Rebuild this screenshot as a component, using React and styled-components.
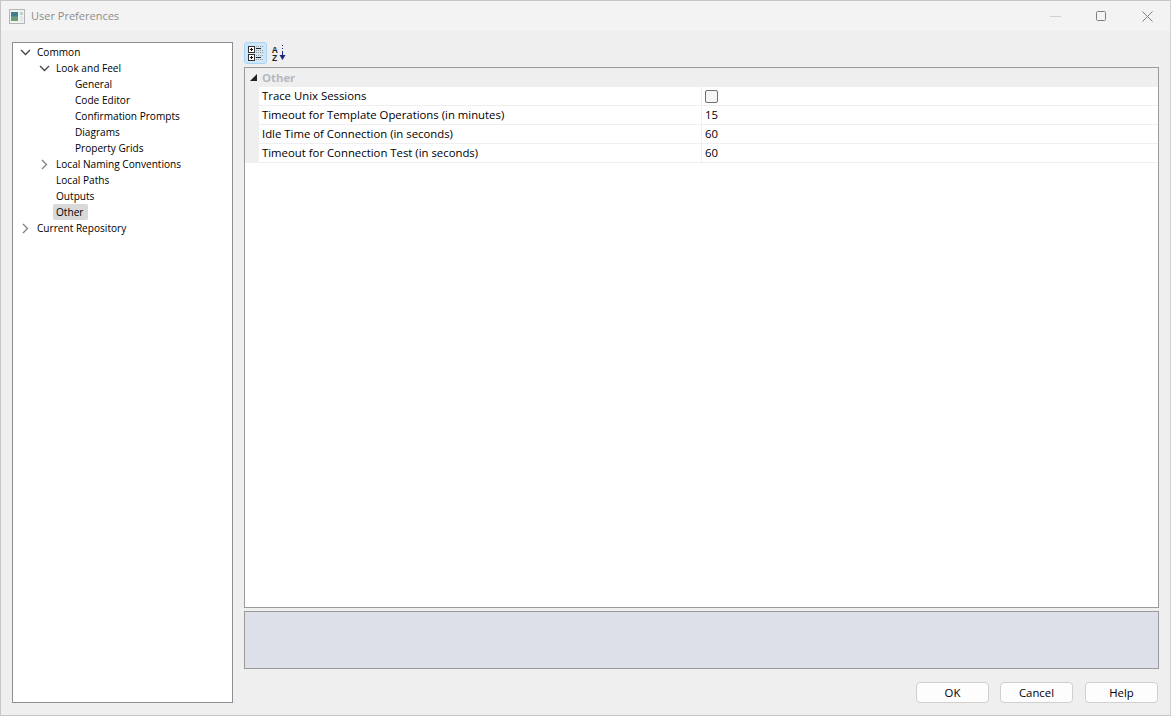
import React from 'react'
import styled, { createGlobalStyle } from 'styled-components'

const Global = createGlobalStyle`
html, body { margin: 0; padding: 0; background: #efefef; }
* { box-sizing: border-box; }
`

const Window = styled.div`
width: 1171px;
height: 716px;
display: flex;
flex-direction: column;
background: #efefef;
border: 1px solid #c6c6c6;
border-right-color: #d0d0d0;
font-family: "Open Sans", "Noto Sans", sans-serif;
font-size: 11.35px;
color: #000;
overflow: hidden;
`

const TitleBar = styled.div`
height: 30px;
display: flex;
align-items: center;
background: #f3f3f3;
padding-left: 8px;
flex-shrink: 0;
`

const Title = styled.div`
margin-left: 6px;
padding-bottom: 2px;
color: #8c8c8c;
font-size: 11px;
flex: 1;
`

const WinButton = styled.div`
width: 46px;
height: 29px;
display: flex;
align-items: center;
justify-content: center;
`

const Content = styled.div`
flex: 1;
display: flex;
padding: 11px 12px 12px 11px;
gap: 11px;
min-height: 0;
`

const Tree = styled.div`
width: 221px;
height: 661px;
background: #fff;
border: 1px solid #8a8f96;
padding-top: 1px;
flex-shrink: 0;
font-size: 10.1px;
`

const TreeRow = styled.div`
height: 16px;
display: flex;
align-items: center;
padding-left: ${p => 7 + p.$level * 19}px;
`

const Chevron = styled.div`
width: 11px;
height: 16px;
display: flex;
align-items: center;
justify-content: center;
`

const TreeLabel = styled.span`
padding: 0 5px 0 3px;
margin-left: 3px;
height: 16px;
line-height: 16px;
border-radius: 2px;
background: ${p => (p.$selected ? '#d9d9d9' : 'transparent')};
white-space: nowrap;
`

const Right = styled.div`
flex: 1;
display: flex;
flex-direction: column;
min-width: 0;
`

const Toolbar = styled.div`
height: 25px;
display: flex;
align-items: flex-start;
gap: 1px;
flex-shrink: 0;
`

const ToolButton = styled.div`
width: 23px;
height: 22px;
display: flex;
align-items: center;
justify-content: center;
border-radius: 3px;
border: 1px solid ${p => (p.$active ? '#a8d4f5' : 'transparent')};
background: ${p => (p.$active ? '#cfe6f8' : 'transparent')};
`

const Grid = styled.div`
width: 915px;
height: 541px;
background: #fff;
border: 1px solid #9a9a9a;
flex-shrink: 0;
`

const CategoryRow = styled.div`
height: 19px;
padding-bottom: 1px;
display: flex;
align-items: center;
background: #efefef;
color: #b4b9c2;
font-weight: 700;
`

const Expander = styled.div`
width: 17px;
display: flex;
justify-content: center;
`

const PropRow = styled.div`
height: 19px;
display: flex;
background: #efefef;
`

const PropName = styled.div`
margin-left: 14px;
width: 443px;
padding-left: 3px;
background: #fff;
border-bottom: 1px solid #efefef;
border-right: 1px solid #efefef;
line-height: 18px;
white-space: nowrap;
`

const PropValue = styled.div`
flex: 1;
padding-left: 3px;
background: #fff;
border-bottom: 1px solid #efefef;
line-height: 17px;
`

const CheckBox = styled.div`
width: 13px;
height: 13px;
margin-top: 3px;
border: 1px solid #6f6f6f;
border-radius: 2px;
background: #f6f6f6;
`

const Description = styled.div`
width: 915px;
height: 58px;
margin-top: 3px;
background: #dde0e8;
border: 1px solid #9a9a9a;
flex-shrink: 0;
`

const Footer = styled.div`
display: flex;
justify-content: flex-end;
gap: 11px;
width: 914px;
margin-top: 13px;
`

const Button = styled.button`
width: 73px;
height: 21px;
padding: 0;
background: #fdfdfd;
border: 1px solid #d0d0d0;
border-radius: 4px;
font: inherit;
color: #000;
`

const HelpButton = styled(Button)`
margin-left: 1px;
`

const ChevronDown = () => (
  <svg width="11" height="7" viewBox="0 0 11 7" fill="none" stroke="#444" strokeWidth="1.3">
    <path d="M1 1l4.5 4.5L10 1" />
  </svg>
)

const ChevronRight = () => (
  <svg width="7" height="11" viewBox="0 0 7 11" fill="none" stroke="#808080" strokeWidth="1.3">
    <path d="M1 1l4.5 4.5L1 10" />
  </svg>
)

const AppIcon = () => (
  <svg width="16" height="15" viewBox="0 0 16 15">
    <rect x="0.5" y="0.5" width="15" height="14" fill="#f2f2f2" stroke="#b5b5b5" />
    <rect x="2" y="3" width="7" height="9" fill="#5b8f9c" />
    <rect x="2" y="3" width="7" height="4" fill="#3f7f8c" />
    <rect x="2" y="8" width="7" height="4" fill="#6a9f73" />
    <rect x="11" y="3" width="3" height="3" fill="#b8d4c4" />
    <rect x="11" y="7" width="3" height="5" fill="#e2e8e8" />
  </svg>
)

const CategorizedIcon = () => (
  <svg width="17" height="17" viewBox="0 0 17 17" fill="none">
    <rect x="1.5" y="1.5" width="6" height="6" fill="#fff" stroke="#333" />
    <path d="M3 4.5h3M4.5 3v3" stroke="#111" />
    <rect x="1.5" y="9.5" width="6" height="6" fill="#fff" stroke="#333" />
    <path d="M3 12.5h3M4.5 11v3" stroke="#111" />
    <path d="M9 3.5h5M9 12.5h5" stroke="#222" />
    <path d="M9 5.5h7M9 7.5h7M9 14.5h7M9 1.5h7M9 10.5h7" stroke="#9a9a9a" strokeDasharray="1 1" />
  </svg>
)

const SortIcon = () => (
  <svg width="17" height="17" viewBox="0 0 17 17">
    <text x="0.8" y="7.5" fontFamily="Liberation Sans" fontSize="8.5" fontWeight="700" fill="#222">A</text>
    <text x="1" y="15.5" fontFamily="Liberation Sans" fontSize="8.5" fontWeight="700" fill="#222">Z</text>
    <path d="M11.5 0v1M11.5 3v1M11.5 6v5" stroke="#1a237e" />
    <path d="M8.5 10h6l-3 5z" fill="#1a237e" />
  </svg>
)

const treeRows = [
  { label: 'Common', level: 0, open: true },
  { label: 'Look and Feel', level: 1, open: true },
  { label: 'General', level: 2 },
  { label: 'Code Editor', level: 2 },
  { label: 'Confirmation Prompts', level: 2 },
  { label: 'Diagrams', level: 2 },
  { label: 'Property Grids', level: 2 },
  { label: 'Local Naming Conventions', level: 1, open: false },
  { label: 'Local Paths', level: 1 },
  { label: 'Outputs', level: 1 },
  { label: 'Other', level: 1, selected: true },
  { label: 'Current Repository', level: 0, open: false },
]

const props = [
  { name: 'Trace Unix Sessions', check: true },
  { name: 'Timeout for Template Operations (in minutes)', value: '15' },
  { name: 'Idle Time of Connection (in seconds)', value: '60' },
  { name: 'Timeout for Connection Test (in seconds)', value: '60' },
]

const App = () => {
  return (
    <Window>
      <Global />
      <TitleBar>
        <AppIcon />
        <Title>User Preferences</Title>
        <WinButton>
          <svg width="11" height="1"><path d="M0 .5h11" stroke="#d0d0d0" /></svg>
        </WinButton>
        <WinButton>
          <svg width="10" height="10"><rect x=".5" y=".5" width="9" height="9" rx="1" fill="none" stroke="#808080" /></svg>
        </WinButton>
        <WinButton>
          <svg width="11" height="11"><path d="M.5.5l10 10M10.5.5l-10 10" stroke="#808080" /></svg>
        </WinButton>
      </TitleBar>
      <Content>
        <Tree>
          {treeRows.map(row => (
            <TreeRow key={row.label} $level={row.level}>
              <Chevron>
                {row.open === true && <ChevronDown />}
                {row.open === false && <ChevronRight />}
              </Chevron>
              <TreeLabel $selected={row.selected}>{row.label}</TreeLabel>
            </TreeRow>
          ))}
        </Tree>
        <Right>
          <Toolbar>
            <ToolButton $active><CategorizedIcon /></ToolButton>
            <ToolButton><SortIcon /></ToolButton>
          </Toolbar>
          <Grid>
            <CategoryRow>
              <Expander>
                <svg width="7" height="7"><path d="M7 0v7H0z" fill="#222" /></svg>
              </Expander>
              Other
            </CategoryRow>
            {props.map(p => (
              <PropRow key={p.name}>
                <PropName>{p.name}</PropName>
                <PropValue>{p.check ? <CheckBox /> : p.value}</PropValue>
              </PropRow>
            ))}
          </Grid>
          <Description />
          <Footer>
            <Button>OK</Button>
            <Button>Cancel</Button>
            <HelpButton>Help</HelpButton>
          </Footer>
        </Right>
      </Content>
    </Window>
  )
}

export default App
